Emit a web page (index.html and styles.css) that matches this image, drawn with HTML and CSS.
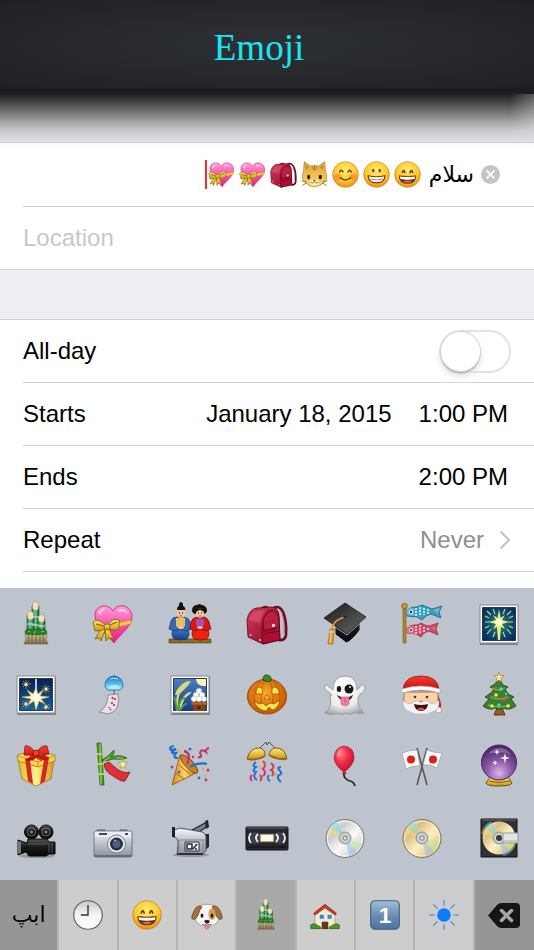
FILE: index.html
```html
<!DOCTYPE html>
<html lang="en">
<head>
<meta charset="utf-8">
<meta name="viewport" content="width=device-width, initial-scale=1">
<title>Emoji</title>
<link rel="stylesheet" href="styles.css">
</head>
<body>
<svg class="sprite" aria-hidden="true">
<defs>
<linearGradient id="pink" x1="0" y1="0" x2="0" y2="1"><stop offset="0" stop-color="#ff9fd4"/><stop offset=".45" stop-color="#fb5ab4"/><stop offset="1" stop-color="#ee1590"/></linearGradient>
<linearGradient id="red" x1="0" y1="0" x2="0" y2="1"><stop offset="0" stop-color="#f4402f"/><stop offset="1" stop-color="#c90d12"/></linearGradient>
<linearGradient id="bagred" x1="0" y1="0" x2="1" y2="1"><stop offset="0" stop-color="#d5395b"/><stop offset="1" stop-color="#8c0522"/></linearGradient>
<linearGradient id="gold" x1="0" y1="0" x2="0" y2="1"><stop offset="0" stop-color="#fff071"/><stop offset="1" stop-color="#c49414"/></linearGradient>
<linearGradient id="gift" x1="0" y1="0" x2="1" y2="0"><stop offset="0" stop-color="#e3b632"/><stop offset=".5" stop-color="#fff08a"/><stop offset="1" stop-color="#d19a1c"/></linearGradient>
<linearGradient id="cone" x1="0" y1="0" x2="1" y2="0"><stop offset="0" stop-color="#d98a17"/><stop offset=".5" stop-color="#ffd467"/><stop offset="1" stop-color="#b5650c"/></linearGradient>
<radialGradient id="face" cx=".5" cy=".35" r=".65"><stop offset="0" stop-color="#ffee72"/><stop offset=".65" stop-color="#fdc92c"/><stop offset="1" stop-color="#e98b12"/></radialGradient>
<linearGradient id="blue" x1="0" y1="0" x2="0" y2="1"><stop offset="0" stop-color="#4b7fc4"/><stop offset="1" stop-color="#123f91"/></linearGradient>
<linearGradient id="night" x1="0" y1="0" x2="0" y2="1"><stop offset="0" stop-color="#06204f"/><stop offset="1" stop-color="#1564a4"/></linearGradient>
<radialGradient id="burst" cx=".5" cy=".5" r=".65"><stop offset="0" stop-color="#3b8f7b"/><stop offset=".5" stop-color="#0a5278"/><stop offset="1" stop-color="#06285f"/></radialGradient>
<linearGradient id="bamboo" x1="0" y1="0" x2="1" y2="0"><stop offset="0" stop-color="#1d7345"/><stop offset=".45" stop-color="#75cb93"/><stop offset="1" stop-color="#0d5a38"/></linearGradient>
<linearGradient id="cane" x1="0" y1="0" x2="1" y2="0"><stop offset="0" stop-color="#2c7311"/><stop offset=".5" stop-color="#8dcc46"/><stop offset="1" stop-color="#296c11"/></linearGradient>
<linearGradient id="straw" x1="0" y1="0" x2="0" y2="1"><stop offset="0" stop-color="#d6c59a"/><stop offset="1" stop-color="#7d6c4e"/></linearGradient>
<radialGradient id="pumpkin" cx=".45" cy=".4" r=".6"><stop offset="0" stop-color="#ffa629"/><stop offset="1" stop-color="#c65606"/></radialGradient>
<radialGradient id="ghost" cx=".45" cy=".3" r=".75"><stop offset="0" stop-color="#fff"/><stop offset=".65" stop-color="#ececec"/><stop offset="1" stop-color="#a5a5a5"/></radialGradient>
<radialGradient id="purple" cx=".5" cy=".8" r=".8"><stop offset="0" stop-color="#ddb5ed"/><stop offset=".45" stop-color="#8c59a9"/><stop offset="1" stop-color="#41205f"/></radialGradient>
<radialGradient id="balloon" cx=".35" cy=".3" r=".7"><stop offset="0" stop-color="#ff7d87"/><stop offset=".5" stop-color="#f12e45"/><stop offset="1" stop-color="#c41230"/></radialGradient>
<linearGradient id="silver" x1="0" y1="0" x2="0" y2="1"><stop offset="0" stop-color="#f4f6f9"/><stop offset=".5" stop-color="#b9bfca"/><stop offset="1" stop-color="#8b92a1"/></linearGradient>
<linearGradient id="dark" x1="0" y1="0" x2="0" y2="1"><stop offset="0" stop-color="#575757"/><stop offset=".45" stop-color="#1b1b1b"/><stop offset="1" stop-color="#050505"/></linearGradient>
<linearGradient id="cap" x1="0" y1="0" x2="1" y2="1"><stop offset="0" stop-color="#191919"/><stop offset="1" stop-color="#6a6a6a"/></linearGradient>
<linearGradient id="cd" x1="0" y1="0" x2="1" y2="1"><stop offset="0" stop-color="#fff"/><stop offset=".3" stop-color="#ccc"/><stop offset=".55" stop-color="#fafafa"/><stop offset="1" stop-color="#bbb"/></linearGradient>
<linearGradient id="dvd" x1="0" y1="0" x2="1" y2="1"><stop offset="0" stop-color="#fff4d6"/><stop offset=".3" stop-color="#dbc184"/><stop offset=".55" stop-color="#fff1c4"/><stop offset="1" stop-color="#c7a865"/></linearGradient>
<linearGradient id="cat" x1="0" y1="0" x2="0" y2="1"><stop offset="0" stop-color="#dfa63a"/><stop offset="1" stop-color="#fbd768"/></linearGradient>
<linearGradient id="keycap" x1="0" y1="0" x2="0" y2="1"><stop offset="0" stop-color="#a6bfd8"/><stop offset=".5" stop-color="#6b8fb5"/><stop offset="1" stop-color="#4b729f"/></linearGradient>
<linearGradient id="bell" x1="0" y1="0" x2="0" y2="1"><stop offset="0" stop-color="#1677c4"/><stop offset=".5" stop-color="#4fb4ef"/><stop offset="1" stop-color="#b5ebff"/></linearGradient>
<linearGradient id="clock" x1="0" y1="0" x2="0" y2="1"><stop offset="0" stop-color="#c9c9c9"/><stop offset=".5" stop-color="#f4f4f4"/><stop offset="1" stop-color="#fff"/></linearGradient>

<symbol id="i-kadomatsu" viewBox="0 0 42 42">
<g stroke="#174b31" stroke-width=".6"><path d="M17 3q3.500-4 7 0v28h-7z" fill="url(#bamboo)"/><path d="M12 13q3-5 7 0v19h-7z" fill="url(#bamboo)"/><path d="M23 16q3.500-4 7 0v15h-7z" fill="url(#bamboo)"/></g>
<g fill="#eee2bd" stroke="#9d8c63" stroke-width=".6"><ellipse cx="20.500" cy="3" rx="3.200" ry="4.600"/><ellipse cx="15.500" cy="12.500" rx="3.200" ry="4.300"/><ellipse cx="26.500" cy="15.500" rx="3.200" ry="4"/></g>
<path d="M17 14h7M12 21h7M17 22h7M23 23h7" stroke="#d8f0cf" stroke-width="1"/>
<path d="M10 31h22l-1 5 2 5H9l2-5z" fill="url(#straw)" stroke="#65543b" stroke-width=".5"/><path d="M14 32l-1 9M17 32v9M21 32v9M25 32v9M28 32l1 9" stroke="#665537" stroke-width=".8"/>
<path d="M10 30q0-4 3-3 2-3 4 0 3-3 5 0 3-3 5 0 4-2 5 3-3 3-6 1-3 2-6 0-3 2-5 0-3 2-5-1z" fill="#2c8126" stroke="#164f15" stroke-width=".6"/><path d="M13 29l2-1M19 30l2-2M26 29l3-1" stroke="#86ce57" stroke-width="1"/>
</symbol>
<symbol id="i-heart" viewBox="0 0 42 42">
<path d="M22 40C17 33 3 25 3 12 3 3 15-1 21 8 26-1 39 2 40 13 40 24 28 31 22 40z" fill="url(#pink)" stroke="#cf1783" stroke-width=".8"/><path d="M6 10q3-6 9-4-5 0-7 6zM26 7q6-3 10 4-5-5-9-2z" fill="#ffd7ee"/>
<path d="M16 22l23-5v4l-22 5z" fill="#f5c936" stroke="#b78315" stroke-width=".5"/>
<g fill="url(#gold)" stroke="#806008" stroke-width=".8"><path d="M14 24l-5 14-2-3-4 1 8-13zM16 24l6 12-6-1-2 3-1-13z"/><path d="M15 23Q5 14 1 19l2 9q7 1 12-4zM15 23q6-9 12-6l0 9q-6 3-12-2z"/><circle cx="15" cy="24" r="3"/></g><path d="M4 21l8 2M18 22l7-3" stroke="#846304" stroke-width="1.200"/>
</symbol>
<symbol id="i-dolls" viewBox="0 0 42 42">
<path d="M0 36h42v4H0z" fill="#8b6d25" stroke="#503b0d" stroke-width=".6"/>
<g stroke-width=".7"><path d="M5 36q-4-5 0-12h13q4 7 0 12-6 2-13 0z" fill="url(#blue)" stroke="#153265"/><path d="M8 14h7q5 1 6 5l1 7-5 2-5-2-6 2-6-2 2-8q1-4 6-4z" fill="#3869b0" stroke="#153265"/><path d="M25 36q-4-5 0-12h13q4 7 0 12-6 2-13 0z" fill="#f12015" stroke="#760d0d"/><path d="M28 14h7q4 1 5 5l2 7-5 2-6-2-5 2-5-2 1-7q1-4 6-5z" fill="#d81813" stroke="#760d0d"/></g>
<path d="M7 15h9v8l-3 2H9l-2-2z" fill="#e5c25e"/><path d="M27 16h8v6l-2 3h-4l-2-3z" fill="#a052b1"/>
<path d="M8 8q0-5 2-5V1q2-4 4 0v2q3 1 2 5z" fill="#111"/><path d="M8 7h8q1 5-1 7-3 2-6 0-2-2-1-7z" fill="#eec49c"/><path d="M23 8q0-6 5-6l2-1 3 1q5 1 5 6-1 3-4 3h-7q-3 0-4-3z" fill="#17100e"/><ellipse cx="31" cy="10" rx="4" ry="5" fill="#f5caa4"/><path d="M27 8q4-4 8 0" fill="none" stroke="#17100e" stroke-width="2"/>
<path d="M10 10h1M13 10h1M29 10h1M32 10h1" stroke="#111"/><path d="M11 13h2M30 13h2" stroke="#c22"/><path d="M9 24l3-1 3 1-1 2h-4zM28 24l3-1 3 1-1 2h-4z" fill="#eec49c"/>
</symbol>
<symbol id="i-bag" viewBox="0 0 42 42">
<path d="M26 6q7-5 11 3 4 9 3 23-1 6-7 5" fill="none" stroke="#6d0b22" stroke-width="2.600"/><path d="M28 6q5-3 8 4 3 8 2 20" fill="none" stroke="#d34c69" stroke-width=".8"/><path d="M15 5q3-4 8-1l-1 3h-7z" fill="#7e0d26"/>
<path d="M17 41L2 34 1 17Q3 6 11 5L26 4q6 1 7 8l1 25z" fill="url(#bagred)" stroke="#570616" stroke-width=".8"/><path d="M17 41q-2-14 0-23Q19 8 26 7q6 1 7 8l1 22z" fill="#a90f32" stroke="#5b071b" stroke-width=".8"/><path d="M6 11q3-4 14-4-5 4-6 13L3 17q0-3 3-6z" fill="#ea7189" opacity=".4"/>
<path d="M18 20l11-3v9l-11 2zM18 31l15-3" fill="none" stroke="#6a0920"/><path d="M18 17q2-8 8-8 5 0 6 7v7l-14 3z" fill="#c22848" opacity=".7"/><path d="M26 21h3v3h-3z" fill="#e4d5d6"/><circle cx="4.500" cy="32" r=".9" fill="#e8d0d5"/><circle cx="14" cy="37" r=".9" fill="#e8d0d5"/>
</symbol>
<symbol id="i-cap" viewBox="0 0 42 42">
<path d="M12 16v15q8 6 10 8 5-1 13-12V14z" fill="url(#dark)" stroke="#080808"/><path d="M21 0L42 14 23 31 0 15z" fill="url(#cap)" stroke="#151515" stroke-width=".8"/><path d="M42 15L23 32 11 24" fill="none" stroke="#aaa" stroke-width="1"/><path d="M21 14Q9 17 8 26" fill="none" stroke="#ed982c" stroke-width="1.800"/><path d="M6 26h4l-1 15H4z" fill="#e49a39" stroke="#875009" stroke-width=".5"/><path d="M7 27l-1 13M5 29h5" stroke="#ffd186"/><ellipse cx="21" cy="14" rx="2" ry="1" fill="#222"/>
</symbol>
<symbol id="i-carp" viewBox="0 0 42 42">
<path d="M2 3h3v37H2z" fill="#a98b36" stroke="#735513" stroke-width=".6"/><circle cx="3.500" cy="3" r="2.800" fill="#c49a31" stroke="#765312" stroke-width=".7"/>
<path d="M6 7q6-4 10-3l5-2 5 2 5 2 10-3-3 6 2 6-10-4-5 2-4 4-5-3-10-1z" fill="#3ba0c8" stroke="#165d87" stroke-width=".8"/><path d="M15 5v8M19 4v9M23 5v7M27 6v5" stroke="#c9f4ff" stroke-width="1.800" stroke-dasharray="2 1"/><path d="M6 7q4-3 7-2v8l-7-1z" fill="#6eb5dc"/><circle cx="10" cy="9" r="2" fill="#fff"/><circle cx="10" cy="9" r="1.200" fill="#233"/><path d="M32 7l7-2-2 5z" fill="#75bfba"/>
<path d="M6 25q5-4 10-3l4-2 4 2 4 1 9-3-2 6 2 6-9-4-5 2-3 4-5-3-9-1z" fill="#d9486b" stroke="#943052" stroke-width=".8"/><path d="M15 23v8M19 22v9M23 24v6M27 25v3" stroke="#ffd1d8" stroke-width="1.800" stroke-dasharray="2 1"/><path d="M6 25q4-3 7-2v8l-7-1z" fill="#e56f8a"/><circle cx="10" cy="27" r="1.800" fill="#fff"/><circle cx="10" cy="27" r="1" fill="#322"/><path d="M30 25l5-2-1 5z" fill="#b9766a"/>
</symbol>
<symbol id="i-sparkler" viewBox="0 0 42 42">
<path d="M2 3h38v39H2z" fill="#555b64" opacity=".6"/><path d="M2 2h38v38H2z" fill="#fff" stroke="#888"/><path d="M4.500 4.500h33v33h-33z" fill="url(#burst)" stroke="#293951"/>
<g stroke="#cfd95a" stroke-width="1.200"><path d="M7 19h5M30 19h5M9 8l4 4M33 8l-4 4M9 31l4-5M33 31l-4-5M15 6l2 5M27 6l-2 5M7 13l4 2M35 13l-4 2M7 25l4-2M35 25l-4-2M15 34l2-5M27 34l-2-5"/></g><path d="M21 6l1.500 9 4.500-3-3 5 7 2-7 2 3 5-4-2-1 13h-2l-1-13-4 2 3-5-7-2 7-2-3-5 4.500 3z" fill="#f3ee72"/><circle cx="21" cy="19" r="3.500" fill="#fffee0"/>
</symbol>
<symbol id="i-fireworks" viewBox="0 0 42 42">
<path d="M2 2h39v38H2z" fill="#555b64" opacity=".6"/><path d="M2 1h38v37H2z" fill="#fff" stroke="#888"/><path d="M4.500 3.500h33v32h-33z" fill="url(#night)" stroke="#293951"/><path d="M20 4h2v15h-2z" fill="#b7c4d5"/>
<path d="M21 13l2 6 5-4-3 6 9 1-8 2 4 5-6-3-3 9-2-9-6 4 3-6-9-2 9-1-4-6 6 4z" fill="#fff5be" stroke="#eabf55" stroke-width=".5"/><circle cx="21" cy="22" r="3" fill="#fff"/>
<g stroke="#c99b4a" stroke-width=".8"><path d="M11 5v9M7 9h9M8 6l6 6M14 6l-6 6M31 10v8M27 14h8M28 11l6 6M34 11l-6 6M11 25v8M7 29h8M8 26l6 6M14 26l-6 6M31 29v6M28 32h7M29 29l5 5M34 29l-5 5"/></g><g fill="#fff2a7"><circle cx="11" cy="9.500" r="1.500"/><circle cx="31" cy="14" r="1.500"/><circle cx="11" cy="29" r="1.500"/><circle cx="31" cy="32" r="1.500"/></g>
</symbol>
<symbol id="i-chime" viewBox="0 0 42 42">
<path d="M22 0v26" stroke="#585d66" stroke-width="1"/><path d="M13 11q0-9 9-10 9 1 9 10 0 2-3 4H16q-3-2-3-4z" fill="url(#bell)" stroke="#17689e" stroke-width=".8"/><path d="M18 4q4-2 8 0" stroke="#c8efff" fill="none"/><ellipse cx="22" cy="12" rx="6" ry="2" fill="#b6e6fc"/>
<path d="M16 20l10-1q3 16-9 20l-10-2q9-5 9-17z" fill="#e7e2e5" stroke="#7d7980" stroke-width=".8"/><path d="M20 22l1 2M23 23v2M20 27v2M22 29v2M17 32v1M19 34l-1 1" stroke="#b73865" stroke-width="1.800"/>
</symbol>
<symbol id="i-moon" viewBox="0 0 42 42">
<path d="M2 2h39v38H2z" fill="#555b64" opacity=".6"/><path d="M2 1h38v37H2z" fill="#fff" stroke="#888"/><path d="M4.500 3.500h33v32h-33z" fill="url(#blue)" stroke="#293951"/><path d="M27 4h10v7q-9 1-10-7z" fill="#fff4b8"/>
<g fill="none" stroke="#e8dd72" stroke-width="2"><path d="M8 35q-1-15 5-22M11 35q2-14 10-17M7 20q2-8 12-13"/></g><path d="M9 20q0-13 13-14-4 7-13 14zM13 25q3-8 10-8-4 4-10 8z" fill="#dbd77a"/><path d="M8 36q-1-10-3-14M9 36q1-13 7-13M10 36q5-8 8-7" stroke="#58974c" stroke-width="2" fill="none"/>
<path d="M22 27h16v3H22z" fill="#b66423" stroke="#603010" stroke-width=".5"/><path d="M24 30h12v6H24z" fill="#854316"/><circle cx="30" cy="32.500" r="1.500" fill="#43200a"/><g fill="#fff" stroke="#adb4bf" stroke-width=".5"><circle cx="30" cy="16" r="2.800"/><circle cx="27" cy="20" r="2.800"/><circle cx="33" cy="20" r="2.800"/><circle cx="25" cy="24" r="2.800"/><circle cx="30" cy="24" r="2.800"/><circle cx="35" cy="24" r="2.600"/></g>
</symbol>
<symbol id="i-pumpkin" viewBox="0 0 42 42">
<ellipse cx="21" cy="21.500" rx="19.500" ry="17.500" fill="url(#pumpkin)" stroke="#954507"/><g fill="none" stroke="#bd5e0a"><ellipse cx="21" cy="21.500" rx="13" ry="17"/><ellipse cx="21" cy="21.500" rx="6" ry="17"/></g><path d="M17 5q0-5 3-5 6 0 5 6-4 2-8-1z" fill="#3e8a28" stroke="#205619"/><path d="M10 19q0-7 4-7 4 2 2 7zM26 19q-1-7 3-7 5 2 4 7zM18 24l3-4 3 4zM8 26l5 3 4-1 3 3 4-3 4 1 6-4q-2 9-8 10l-3-3-3 4q-9-1-12-10z" fill="#ffe845" stroke="#a35208" stroke-width=".8"/>
</symbol>
<symbol id="i-ghost" viewBox="0 0 42 42">
<path d="M8 20q-2-1-3-3-6-3-4-7 2-1 4 2l4 3Q9 1 21 1q12 0 12 14l3-3q2-4 5-1 1 6-5 8l-2 4q-1 9 6 15-6 2-9-1-5 4-9 1-5 3-9 0-5 3-12 0 8-6 5-18z" fill="url(#ghost)" stroke="#8e8e8e" stroke-width=".8"/><ellipse cx="15" cy="14" rx="2.200" ry="3" fill="#171717"/><circle cx="25" cy="14" r="4.500" fill="#171717"/><path d="M13 20q8 5 16 0-2 6-8 6-6-1-8-6z" fill="#36191e"/><path d="M17 22h8v7q-4 4-8 0z" fill="#f17ea6" stroke="#c0527a" stroke-width=".6"/><path d="M21 23v5" stroke="#c85480"/><circle cx="26" cy="12" r="1" fill="#eee"/>
</symbol>
<symbol id="i-santa" viewBox="0 0 42 42">
<path d="M35 17q6 9 5 17-6 1-6-4z" fill="#bd1214"/><circle cx="37.500" cy="35" r="3" fill="#f4f4f4" stroke="#aaa"/><path d="M3 17h34v11q-5 10-17 10T3 28z" fill="#fbd3a2" stroke="#9b7650"/><path d="M2 25q4 5 9 3 5-4 9-1 5-3 9 1 5 2 9-3 1 10-7 12-5 3-11 2-6 1-11-2-8-3-7-12z" fill="#f3f3f3" stroke="#aaa" stroke-width=".6"/><path d="M2 15Q3 1 20 1t18 14z" fill="url(#red)" stroke="#9f1210" stroke-width=".8"/><path d="M1 14q19-6 38 0v4q-19-6-38 0z" fill="#fff" stroke="#aaa" stroke-width=".6"/><path d="M10 20q3-2 6 0M24 20q3-2 6 0" fill="none" stroke="#ddd" stroke-width="2"/><circle cx="14" cy="22" r="1.300" fill="#563318"/><circle cx="26" cy="22" r="1.300" fill="#563318"/><path d="M18 26q2 2 4 0" stroke="#bd7849" fill="none"/><path d="M13 29q7 2 14 0-1 7-7 7t-7-7z" fill="#311"/><path d="M16 34q4-3 8 0-4 3-8 0z" fill="#e94a48"/>
</symbol>
<symbol id="i-tree" viewBox="0 0 42 42">
<path d="M19 33h5l3 7H16z" fill="#985c23" stroke="#603309"/><path d="M21 3l4 7 5 2-3 2 3 5 6 3-3 2 5 7q-8 5-12 2-5 3-9 0-5 3-12-2l6-7-4-2 6-4 3-4-4-2 5-3z" fill="#3d7d31" stroke="#21571f"/><path d="M14 13q7 4 13 0M13 22q8 4 17 0M10 30q10 4 22 0" stroke="#75ae3e" stroke-width="1.500" fill="none"/><path d="M21-3l1.500 3.500H26L23 3l1 4-3-2-3 2 1-4-3-2.500h4z" fill="#fff0a0" stroke="#b07d3b" stroke-width=".7"/><g fill="#f2e94c"><circle cx="18" cy="20" r="1.800"/><circle cx="14" cy="31" r="1.800"/><circle cx="30" cy="31" r="1.800"/></g><g fill="#ec5145"><circle cx="26" cy="24" r="1.800"/><circle cx="18" cy="13" r="1.200"/></g><g fill="#51d6ca"><circle cx="23" cy="14" r="1.800"/><circle cx="21" cy="30" r="1.800"/><circle cx="28" cy="19" r="1.200"/></g>
</symbol>
<symbol id="i-gift" viewBox="0 0 42 42">
<path d="M3 13l18 6 18-6-3 19-15 7-14-7z" fill="url(#gift)" stroke="#9c6b12" stroke-width=".7"/><path d="M2 8l17-4 21 4v6l-17 6L3 14z" fill="#f7d453" stroke="#9c6b12" stroke-width=".7"/><path d="M3 9l20 6 16-6M23 15v5" fill="none" stroke="#b2831c" stroke-width=".7"/><path d="M10 11l5 2 3 24-5-3zM34 11l-5 2-4 24 5-3z" fill="#d32920"/><path d="M11 6l8-2 12 7-5 3z" fill="#d93227"/><path d="M21 6q-7-9-11-7l-1 9q6 1 12-1zM21 6q6-9 11-7l2 8q-7 2-13 0zM19 7l-8 6 7 0 4-4 8 4 4-2-9-5z" fill="url(#red)" stroke="#850e0b" stroke-width=".7"/><circle cx="21" cy="6" r="3" fill="#ec4031" stroke="#850e0b" stroke-width=".7"/>
</symbol>
<symbol id="i-tanabata" viewBox="0 0 42 42">
<path d="M5-4h4l3 42H8z" fill="url(#cane)" stroke="#275e14" stroke-width=".7"/><path d="M4 7h6M5 17h6M6 27h6" stroke="#c7e277" stroke-width="1.500"/><path d="M10 13Q16 10 22 3q1 4-3 7 9-3 16 1-5 2-14 1-5 2-11 2z" fill="#4b9d27" stroke="#21600d" stroke-width=".8"/><path d="M12 17q1 8 9 12 8 6 12 5l5-9q-6 2-13-3l-8-7z" fill="#dc3135" stroke="#89151a" stroke-width=".8"/><path d="M31 12l1.300 3.500h3.500l-3 2.500 1 3.500-2.800-2-3 2 1-3.500-3-2.500h3.700z" fill="#fff19c" stroke="#b9983c" stroke-width=".7"/><path d="M12 14l6-4M24 11h7" stroke="#9bd14b"/>
</symbol>
<symbol id="i-party" viewBox="0 0 42 42">
<path d="M11 8q14 2 18 17L3 38z" fill="url(#cone)" stroke="#8a4d0b" stroke-width=".8"/><ellipse cx="20" cy="17" rx="4" ry="12" transform="rotate(-43 20 17)" fill="#c98325" stroke="#794309" stroke-width=".8"/><path d="M7 26l8 6M10 18l11 9" stroke="#a9650f"/><path d="M18 17q5-11-3-13" fill="none" stroke="#c63372" stroke-width="2.500"/><path d="M21 20q8-5 17-3M5-1q-6 1-3 4l5-1q-8 5 0 4-4 5 2 5" fill="none" stroke="#236ed1" stroke-width="2.200"/><path d="M40 1q-4 1-3 4-5-4-6 1 3 5-2 4" fill="none" stroke="#bf3170" stroke-width="2"/>
<g fill="#cc2f68"><circle cx="3" cy="20" r="1.500"/><circle cx="39" cy="23" r="1.500"/><circle cx="37" cy="33" r="1.400"/><circle cx="24" cy="10" r="1.200"/></g><g fill="#276ece"><circle cx="21" cy="2" r="1.500"/><circle cx="30" cy="31" r="1.400"/><circle cx="10" cy="25" r="1.400"/></g><g fill="#dfb23c"><circle cx="10" cy="4" r="1.500"/><circle cx="34" cy="22" r="1.400"/><circle cx="36" cy="29" r="1.300"/></g>
</symbol>
<symbol id="i-kusudama" viewBox="0 0 42 42">
<path d="M13 2l7-7 1 3 2-3 8 8" fill="none" stroke="#4b4e55"/><path d="M1 12Q4 0 14 1q6 2 5 8-9 5-18 3z" fill="url(#gold)" stroke="#875112"/><path d="M41 12Q39 0 29 1q-6 2-6 7 8 5 18 4z" fill="url(#gold)" stroke="#875112"/><path d="M2 12q9 2 17-3M40 12q-9 1-17-4" fill="none" stroke="#9c6417" stroke-width="2"/>
<g fill="none" stroke-width="2"><path d="M10 15q-5 4 0 5-5 4 0 5-4 5 1 8M35 20q-5 0-1 4 3 3-1 4-3 3 2 7M23 28q-3 4 1 6" stroke="#246ed1"/><path d="M17 14q4 4 0 8 4 4 0 7M25 16q5 4 0 7 4 2 1 6M6 28q-3 3 0 6M14 28q3 3 0 6" stroke="#d83469"/></g><g fill="#e3a52a"><circle cx="20" cy="18" r="1"/><circle cx="29" cy="27" r="1.500"/><circle cx="21" cy="32" r="1"/><circle cx="15" cy="21" r="1"/></g>
</symbol>
<symbol id="i-balloon" viewBox="0 0 42 42">
<path d="M20 26q-1 6 6 8 4 1 5 5" stroke="#202328" stroke-width="1.800" fill="none"/><path d="M20-1q10 1 10 12-1 8-10 14-9-6-10-14Q11 0 20-1z" fill="url(#balloon)" stroke="#ac1830" stroke-width=".7"/><path d="M18 27l2-4 3 4z" fill="#c61a32"/><path d="M13 9q1-6 6-7-4 3-4 8z" fill="#ff9ca3"/>
</symbol>
<symbol id="i-flags" viewBox="0 0 42 42">
<path d="M16 1l10 37M26 1L16 38" stroke="#565759" stroke-width="1.600"/><path d="M16 3Q8 3 1 6l4 16q6-4 14-3zM26 3q7 3 15 3l-5 15q-6-4-14-3z" fill="#fafafa" stroke="#a5a5a5" stroke-width=".8"/><circle cx="10" cy="12.500" r="4" fill="#d9241c"/><circle cx="32" cy="12.500" r="4" fill="#d9241c"/>
</symbol>
<symbol id="i-crystal" viewBox="0 0 42 42">
<path d="M12 30h18l4 6q-1 3-13 3T8 36z" fill="url(#gold)" stroke="#6e4b11"/><path d="M11 34q10 3 21 0" stroke="#7d5819" fill="none"/><circle cx="21" cy="15.500" r="17.500" fill="url(#purple)" stroke="#482260"/><path d="M10 7q5-6 11-6 8 0 12 7-9-5-23-1z" fill="#d8b9e6" opacity=".35"/><path d="M27 6l1 4 4 1-4 1-1 5-1-5-4-1 4-1zM19 2l.8 2.500 2.200.5-2.200.8L19 8l-.8-2.200L16 5l2.200-.5zM17 13l.7 2 2 .7-2 .7-.7 2-.7-2-2-.7 2-.7z" fill="#fff"/>
</symbol>
<symbol id="i-moviecam" viewBox="0 0 42 42">
<ellipse cx="22" cy="37" rx="18" ry="2" fill="#555" opacity=".4"/><g fill="url(#dark)" stroke="#090909"><circle cx="16.500" cy="13" r="7"/><circle cx="31" cy="13" r="7"/><path d="M13 20h19l2 3h6v12h-6l-3 2H14l-3-4-8 3V21l9 3z"/></g><g fill="none" stroke="#6a6a6a" stroke-width="1"><circle cx="16.500" cy="13" r="4"/><circle cx="31" cy="13" r="4"/></g><circle cx="16.500" cy="13" r="1.500" fill="#888"/><circle cx="31" cy="13" r="1.500" fill="#888"/><path d="M3 22l3 1v11l-3 1z" fill="#777"/><path d="M14 25h18M34 24v10M37 24v10" stroke="#555"/>
</symbol>
<symbol id="i-camera" viewBox="0 0 42 42">
<path d="M5 11h8v3H5zM28 11h7v3h-7z" fill="#b9bdc5" stroke="#555"/><rect x="2" y="12" width="38" height="26" rx="2" fill="url(#silver)" stroke="#626875" stroke-width=".8"/><path d="M3 17h36" stroke="#f8f9fb"/><path d="M7 14h8v2H7zM33 14h3v2h-3z" fill="#454b56"/><circle cx="24.500" cy="25" r="9" fill="#e4e7ec" stroke="#7c818d"/><circle cx="24.500" cy="25" r="6.500" fill="#292d35"/><circle cx="24.500" cy="25" r="4" fill="#555d74"/><circle cx="24.500" cy="25" r="2" fill="#385cba"/><path d="M22 22l2-1" stroke="#cad9ff"/><path d="M2 36h38v2H2z" fill="#656d7b"/>
</symbol>
<symbol id="i-videocam" viewBox="0 0 42 42">
<ellipse cx="22" cy="36" rx="18" ry="2" fill="#555" opacity=".4"/><path d="M23 11l13-7 3 3-9 6z" fill="#777e8a" stroke="#23262a" stroke-width="1.200"/><path d="M36 2l3-1 1 7-3 2z" fill="#232529"/><path d="M36 15h4v13l-4 3z" fill="#23262b"/><path d="M5 11q5-3 12-1l16 3q3 1 4 4v15l-3 3H8l1-9q1-8-5-8z" fill="url(#silver)" stroke="#4e535e"/><path d="M3 8h3v10H3z" fill="#202226"/><path d="M10 21h26M10 21v12M34 21v12" fill="none" stroke="#7e8491"/><path d="M16 23h14v9H16z" fill="#f1f2f4" stroke="#252930"/><path d="M18 25h5v5h-5zM24 30l4-5M26 30h2" fill="none" stroke="#252930" stroke-width="1.500"/><path d="M8 34h26v2H8z" fill="#2d3036"/>
</symbol>
<symbol id="i-vhs" viewBox="0 0 42 42">
<rect x="0" y="8" width="42" height="23" rx="1" fill="#26272f" stroke="#141519"/><path d="M1 9h40" stroke="#696d75"/><ellipse cx="9" cy="19" rx="6" ry="6" fill="#3d3e4b"/><ellipse cx="33" cy="19" rx="6" ry="6" fill="#3d3e4b"/><path d="M5 14q-4 5 0 10M37 14q4 5 0 10M12 15q-4 4 0 8M30 15q4 4 0 8" fill="none" stroke="#eee" stroke-width="1.800"/><path d="M14 15h14v8H14z" fill="#fff9d7" stroke="#565751"/><path d="M2 28h38" stroke="#111"/>
</symbol>
<symbol id="i-shine" viewBox="0 0 42 42">
<path d="M21 19L6 8q3-4 7-6z" fill="#77e0df" opacity=".5"/><path d="M21 19L3 15q1-4 3-7z" fill="#f5d27a" opacity=".5"/><path d="M21 19l17 6q-2 5-5 8z" fill="#b6ec82" opacity=".5"/><path d="M21 19l12 14q-4 4-8 4z" fill="#8ebaf7" opacity=".5"/><circle cx="21" cy="19" r="6" fill="#bfc1c3" stroke="#949699"/><circle cx="21" cy="19" r="3.500" fill="#8f9295" stroke="#eee"/><circle cx="21" cy="19" r="1.500" fill="#dfe2e5"/>
</symbol>
<symbol id="i-cd" viewBox="0 0 42 42"><circle cx="21" cy="19.500" r="19" fill="url(#cd)" stroke="#777" stroke-width="1"/><circle cx="21" cy="19.500" r="17.500" fill="none" stroke="#fff" stroke-width=".8"/><use href="#i-shine" width="42" height="42"/></symbol>
<symbol id="i-dvd" viewBox="0 0 42 42"><circle cx="21" cy="19.500" r="19" fill="url(#dvd)" stroke="#817352" stroke-width="1"/><circle cx="21" cy="19.500" r="17.500" fill="none" stroke="#fff3d0" stroke-width=".8"/><use href="#i-shine" width="42" height="42"/></symbol>
<symbol id="i-minidisc" viewBox="0 0 42 42"><path d="M3 0h36v38H3z" fill="#303134" stroke="#111"/><path d="M4 1h34" stroke="#707277"/><circle cx="21" cy="19" r="16.500" fill="url(#dvd)"/><use href="#i-shine" width="42" height="42"/><circle cx="21" cy="19" r="3" fill="#393c3f"/><path d="M25 14h15v10H25z" fill="#e4e4e4" stroke="#999"/><path d="M26 22h13" stroke="#aaa"/></symbol>
<symbol id="i-laugh" viewBox="0 0 42 42"><circle cx="21" cy="21" r="20" fill="url(#face)" stroke="#d87814"/><path d="M13 18q2-6 4 0M25 18q2-6 4 0" fill="none" stroke="#703c08" stroke-width="2.500" stroke-linecap="round"/><path d="M8 23q13 2 26 0 0 12-13 12T8 23z" fill="#683115" stroke="#5a2e09"/><path d="M9 24q12 2 24 0l-1 4q-11 2-22 0z" fill="#fff"/><path d="M14 32q7-3 14 0-6 4-14 0z" fill="#df6951"/></symbol>
<symbol id="i-grin" viewBox="0 0 42 42"><circle cx="21" cy="21" r="20" fill="url(#face)" stroke="#d87814"/><ellipse cx="16" cy="15" rx="1.800" ry="2.800" fill="#703c08"/><ellipse cx="26" cy="15" rx="1.800" ry="2.800" fill="#703c08"/><path d="M8 23q13 3 26 0 0 11-13 11T8 23z" fill="#fff" stroke="#713b0d" stroke-width="1.800"/><path d="M10 28q11 3 22 0" fill="none" stroke="#713b0d"/></symbol>
<symbol id="i-blush" viewBox="0 0 42 42"><circle cx="21" cy="21" r="20" fill="url(#face)" stroke="#d87814"/><ellipse cx="9" cy="25" rx="6" ry="5" fill="#ff7934" opacity=".6"/><ellipse cx="33" cy="25" rx="6" ry="5" fill="#ff7934" opacity=".6"/><path d="M12 17q2-5 5 0M25 17q2-5 5 0M13 26q8 7 16 0" fill="none" stroke="#783e09" stroke-width="2.400" stroke-linecap="round"/></symbol>
<symbol id="i-cat" viewBox="0 0 42 42"><path d="M4 16L5 1l10 7q6-2 12 0l10-7 1 15q5 12-3 18-6 6-14 6T7 34Q-1 28 4 16z" fill="url(#cat)" stroke="#a77822"/><path d="M7 5l1 9 5-4zM35 5l-1 9-5-4z" fill="#c98b45"/><path d="M18 8l1 6M21 7v8M24 8l-1 6" stroke="#b77b20" stroke-width="1.500"/><ellipse cx="12" cy="25" rx="2.500" ry="3.800" fill="#28200e"/><ellipse cx="30" cy="25" rx="2.500" ry="3.800" fill="#28200e"/><ellipse cx="21" cy="33" rx="7" ry="5" fill="#fff0b3"/><path d="M18 29h6l-3 3z" fill="#8d502b"/><path d="M21 32q-3 4-6 1M21 32q3 4 6 1M1 31l7 1M2 38l7-4M41 31l-7 1M40 38l-7-4" fill="none" stroke="#765620" stroke-width="1.200"/></symbol>
<symbol id="i-dog" viewBox="0 0 42 42"><path d="M8 14Q10 6 21 6t13 8q6 11 1 18-5 5-14 5T7 32q-5-7 1-18z" fill="#f5f5f3" stroke="#8e8a82"/><path d="M12 8Q5 8 2 17q-4 8-1 10 5 1 8-7 1-6 5-10zM30 8q7 0 10 9 4 8 1 10-5 1-8-7-1-6-5-10z" fill="#a0723d" stroke="#624019"/><ellipse cx="28" cy="20" rx="5" ry="8" fill="#d79e56"/><ellipse cx="14" cy="22" rx="2" ry="3" fill="#201b17"/><ellipse cx="28" cy="22" rx="2" ry="3" fill="#201b17"/><path d="M17 29q4-2 8 0-1 4-4 4t-4-4z" fill="#1d1918"/><path d="M21 31v3M14 34q5 2 7-1 2 3 7 1" stroke="#665852" fill="none"/><path d="M18 35h6v4q-3 4-6 0z" fill="#f080a1" stroke="#bd5278" stroke-width=".6"/></symbol>
<symbol id="i-clock" viewBox="0 0 42 42"><circle cx="21" cy="21" r="20" fill="url(#clock)" stroke="#606060" stroke-width="1.600"/><path d="M21 7v14H11" fill="none" stroke="#333" stroke-width="2"/></symbol>
<symbol id="i-house" viewBox="0 0 42 42"><path d="M7 16L21 7l14 9v24H7z" fill="#f3ebcb" stroke="#a09673"/><path d="M5 19L21 6l16 13-2 2L21 11 7 21z" fill="#cc3928" stroke="#8c2014"/><path d="M13 20h7v7h-7zM24 20h7v7h-7z" fill="#3588ce" stroke="#fff"/><path d="M17 31h8v9h-8z" fill="#683616" stroke="#412009"/><path d="M1 35q4-3 7-1l7 4v2H1zM41 35q-4-3-7-1l-7 4v2h14z" fill="#4c942e" stroke="#285d18"/></symbol>
<symbol id="i-one" viewBox="0 0 42 42"><rect x="1" y="1" width="40" height="40" rx="6" fill="url(#keycap)" stroke="#3e5f84" stroke-width="1.600"/><text x="21" y="32" text-anchor="middle" class="keycap-digit">1</text></symbol>
<symbol id="i-sun" viewBox="0 0 42 42"><circle cx="21" cy="21" r="9.500" fill="#087eff"/><path d="M21 0v8M21 34v8M0 21h8M34 21h8M6 6l6 6M30 30l6 6M36 6l-6 6M6 36l6-6" stroke="#2d87e8" stroke-width="1.500"/></symbol>
</defs>
</svg>

<header class="banner"><h1 class="banner-title">Emoji</h1></header>
<div class="banner-shadow"></div>

<main class="form">
  <section class="group">
    <div class="row title-row" dir="rtl">
      <button class="clear" type="button" aria-label="Clear"><svg viewBox="0 0 20 20"><circle cx="10" cy="10" r="10" fill="#c5c5c7"/><path d="M6.500 6.500l7 7M13.500 6.500l-7 7" stroke="#fff" stroke-width="2" stroke-linecap="round"/></svg></button>
      <input class="title-input" type="text" value="سلام" aria-label="Title" lang="fa">
      <span class="title-emoji"><svg><use href="#i-laugh"/></svg><svg><use href="#i-grin"/></svg><svg><use href="#i-blush"/></svg><svg><use href="#i-cat"/></svg><svg><use href="#i-bag"/></svg><svg><use href="#i-heart"/></svg><svg><use href="#i-heart"/></svg></span>
      <span class="caret"></span>
    </div>
    <div class="row"><input class="location" type="text" placeholder="Location" aria-label="Location"></div>
  </section>

  <section class="group">
    <div class="row"><label class="name" for="all-day">All-day</label><input class="switch" id="all-day" type="checkbox" role="switch"></div>
    <div class="row"><span class="name">Starts</span><time class="date">January 18, 2015</time><time class="time">1:00 PM</time></div>
    <div class="row"><span class="name">Ends</span><time class="time">2:00 PM</time></div>
    <button class="row repeat" type="button"><span class="name">Repeat</span><span class="muted">Never</span><svg class="chevron" viewBox="0 0 12 20"><path d="M1.500 1.500L10 10l-8.500 8.500" fill="none" stroke="#c3c3c8" stroke-width="2"/></svg></button>
  </section>
</main>

<section class="keyboard" aria-label="Emoji keyboard">
  <div class="keys">
    <button class="key" aria-label="Pine decoration"><svg><use href="#i-kadomatsu"/></svg></button>
    <button class="key" aria-label="Heart with ribbon"><svg><use href="#i-heart"/></svg></button>
    <button class="key" aria-label="Dolls"><svg><use href="#i-dolls"/></svg></button>
    <button class="key" aria-label="School bag"><svg><use href="#i-bag"/></svg></button>
    <button class="key" aria-label="Graduation cap"><svg><use href="#i-cap"/></svg></button>
    <button class="key" aria-label="Carp streamers"><svg><use href="#i-carp"/></svg></button>
    <button class="key" aria-label="Sparkler"><svg><use href="#i-sparkler"/></svg></button>
    <button class="key" aria-label="Fireworks"><svg><use href="#i-fireworks"/></svg></button>
    <button class="key" aria-label="Wind chime"><svg><use href="#i-chime"/></svg></button>
    <button class="key" aria-label="Moon viewing"><svg><use href="#i-moon"/></svg></button>
    <button class="key" aria-label="Pumpkin"><svg><use href="#i-pumpkin"/></svg></button>
    <button class="key" aria-label="Ghost"><svg><use href="#i-ghost"/></svg></button>
    <button class="key" aria-label="Santa"><svg><use href="#i-santa"/></svg></button>
    <button class="key" aria-label="Christmas tree"><svg><use href="#i-tree"/></svg></button>
    <button class="key" aria-label="Gift"><svg><use href="#i-gift"/></svg></button>
    <button class="key" aria-label="Tanabata tree"><svg><use href="#i-tanabata"/></svg></button>
    <button class="key" aria-label="Party popper"><svg><use href="#i-party"/></svg></button>
    <button class="key" aria-label="Confetti ball"><svg><use href="#i-kusudama"/></svg></button>
    <button class="key" aria-label="Balloon"><svg><use href="#i-balloon"/></svg></button>
    <button class="key" aria-label="Crossed flags"><svg><use href="#i-flags"/></svg></button>
    <button class="key" aria-label="Crystal ball"><svg><use href="#i-crystal"/></svg></button>
    <button class="key" aria-label="Movie camera"><svg><use href="#i-moviecam"/></svg></button>
    <button class="key" aria-label="Camera"><svg><use href="#i-camera"/></svg></button>
    <button class="key" aria-label="Video camera"><svg><use href="#i-videocam"/></svg></button>
    <button class="key" aria-label="Video cassette"><svg><use href="#i-vhs"/></svg></button>
    <button class="key" aria-label="CD"><svg><use href="#i-cd"/></svg></button>
    <button class="key" aria-label="DVD"><svg><use href="#i-dvd"/></svg></button>
    <button class="key" aria-label="Minidisc"><svg><use href="#i-minidisc"/></svg></button>
  </div>
  <nav class="tabs">
    <button class="tab action letters" lang="fa">ابپ</button>
    <button class="tab" aria-label="Recent"><svg><use href="#i-clock"/></svg></button>
    <button class="tab" aria-label="People"><svg><use href="#i-laugh"/></svg></button>
    <button class="tab" aria-label="Nature"><svg><use href="#i-dog"/></svg></button>
    <button class="tab selected" aria-label="Objects"><svg><use href="#i-kadomatsu"/></svg></button>
    <button class="tab" aria-label="Places"><svg><use href="#i-house"/></svg></button>
    <button class="tab" aria-label="Symbols"><svg><use href="#i-one"/></svg></button>
    <button class="tab" aria-label="Brightness"><svg><use href="#i-sun"/></svg></button>
    <button class="tab action" aria-label="Delete"><svg class="delete" viewBox="0 0 32 25"><path d="M0 12.500L9 2q2-2 4-2h15q4 0 4 4v17q0 4-4 4H13q-2 0-4-2z" fill="#151515"/><path d="M13.500 7.500l10 10M23.500 7.500l-10 10" stroke="#a5a5a5" stroke-width="3.500" stroke-linecap="round"/></svg></button>
  </nav>
</section>
</body>
</html>
```
FILE: styles.css
```css
* { box-sizing: border-box; }

body {
  margin: 0;
  min-height: 100vh;
  display: flex;
  flex-direction: column;
  background: #fff;
  color: #000;
  font-family: "Liberation Sans", Arial, sans-serif;
  font-size: 24px;
  line-height: 28px;
}

button, input {
  margin: 0;
  padding: 0;
  border: 0;
  background: none;
  color: inherit;
  font: inherit;
}

svg, symbol { overflow: visible; }
.sprite { position: absolute; width: 0; height: 0; }

.banner {
  height: 88px;
  padding: 8px 16px 0 0;
  display: flex;
  align-items: center;
  justify-content: center;
  background: radial-gradient(ellipse at 50% 50%, #2c3135 0%, #27282c 50%, #1f1f24 100%);
}

.banner-title {
  margin: 0;
  color: #1de4f2;
  font-family: "Liberation Serif", "Times New Roman", serif;
  font-size: 37px;
  font-weight: 400;
  line-height: 44px;
}

.banner-shadow {
  height: 54px;
  background:
    linear-gradient(to left, rgba(226, 225, 230, 0.3), rgba(226, 225, 230, 0) 24px) 0 6px no-repeat,
    linear-gradient(#1c1c1c 0, #1e1e1e 6px, #3a3a3b 12px, #6a6a6b 22px, #9a9a9c 32px, #c6c5ca 42px, #e2e1e6 54px);
}

.form { flex: 1; }

.group {
  border-top: 1px solid #d0cfd5;
  background: linear-gradient(#f9f9fa, #fff 10px);
}

.group + .group {
  border-top: 0;
  padding-top: 50px;
  background: linear-gradient(#efeef5 49px, #d0cfd5 49px, #d0cfd5 50px, #fff 50px);
}

.row {
  width: calc(100% - 23px);
  height: 63px;
  margin-left: 23px;
  padding-right: 26px;
  display: flex;
  align-items: center;
  border-bottom: 1px solid #d3d3d6;
  text-align: left;
}

.group:first-child .row { height: 64px; }
.group:first-child .row:last-child {
  width: 100%;
  height: 63px;
  margin: 0;
  padding-left: 23px;
}

.name { margin-right: auto; }
.date { margin-right: 27px; }

.title-row { padding-right: 34px; }
.clear { width: 19px; height: 19px; }
.clear svg { display: block; width: 19px; height: 19px; }

.title-input {
  width: 44px;
  margin-right: 7px;
  height: 36px;
  font-family: "DejaVu Sans", sans-serif;
  font-size: 22px;
}

.title-emoji {
  display: flex;
  gap: 4px;
  margin-right: 9px;
}
.title-emoji svg { width: 27px; height: 27px; }
.caret { width: 2px; height: 29px; margin-right: 1px; background: #ef2f35; }

.location { width: 100%; height: 40px; }
.location::placeholder { color: #c7c7cc; opacity: 1; }

.switch {
  appearance: none;
  width: 72px;
  height: 43px;
  margin-right: -3px;
  border: 2px solid #e3e3e3;
  border-radius: 22px;
}
.switch::before {
  content: "";
  display: block;
  width: 39px;
  height: 39px;
  border-radius: 50%;
  background: #fff;
  box-shadow: 0 0 0 1px #d5d5d5, 0 2px 2px #999, 0 5px 8px #ddd;
}

.repeat { padding-right: 23px; }
.muted { color: #8e8e93; }
.chevron { width: 12px; height: 20px; margin-left: 15px; }

.keyboard { background: #bdc4cd; }

.keys {
  padding: 0 14px 4px 15px;
  display: grid;
  grid-template-columns: repeat(7, 42px);
  grid-auto-rows: 72px;
  justify-content: space-between;
}

.key, .tab {
  display: flex;
  align-items: center;
  justify-content: center;
}
.key svg { width: 42px; height: 42px; }

.tabs {
  height: 70px;
  display: grid;
  grid-template-columns: repeat(9, 1fr);
}
.tab { background: #cdcdcd; border-right: 2px solid #b3b5bb; }
.tab:last-child { border-right: 0; }
.tab svg { width: 30px; height: 30px; }
.tab.selected { background: #a9a9a9; }
.tab.action { background: #969696; }
.tab .delete { width: 32px; height: 25px; }

.letters {
  font-family: "DejaVu Sans", sans-serif;
  font-size: 22px;
}

.keycap-digit {
  fill: #fff;
  font: bold 32px "Liberation Sans", Arial, sans-serif;
}
```
